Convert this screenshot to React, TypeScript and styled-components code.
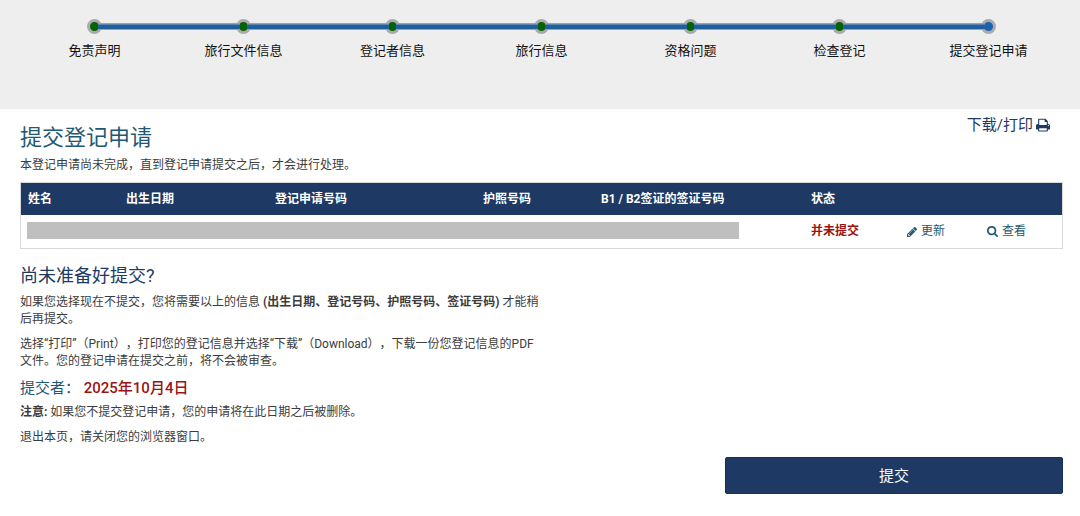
import React from "react";
import styled, { createGlobalStyle } from "styled-components";

const navy = "#1e3963";
const teal = "#1f5872";
const red = "#9b1313";

const GlobalStyle = createGlobalStyle`
  *, *::before, *::after { box-sizing: border-box; }
  body {
    margin: 0;
    background: #fff;
    color: #3c3c3c;
    font: 12px/17px Roboto, "Noto Sans CJK SC", sans-serif;
    text-spacing-trim: space-all;
  }
  h1, h2, h3, p, ol { margin: 0; padding: 0; }
  a { color: inherit; text-decoration: none; }
`;

const Progress = styled.nav`
  min-height: 109px;
  padding: 19px 17px 0 20px;
  background: #eee;
`;

const StepList = styled.ol`
  display: flex;
  list-style: none;
`;

const StepItem = styled.li`
  flex: 1;
  min-width: 0;
`;

const Track = styled.div`
  display: flex;
  align-items: center;
`;

const Segment = styled.span<{ $hidden: boolean }>`
  position: relative;
  z-index: 1;
  flex: 1;
  height: 7px;
  border: solid #93a5b5;
  border-width: 1px 0;
  background: #205f9e;
  box-shadow: inset 0 1px #5f86ac;
  visibility: ${(p) => (p.$hidden ? "hidden" : "visible")};
`;

const Dot = styled.span<{ $current: boolean }>`
  width: 15px;
  height: 15px;
  margin: 0 -4px;
  border: 3px solid #aaa;
  border-radius: 50%;
  background: ${(p) => (p.$current ? "#1862ae" : "#056205")};
`;

const StepLabel = styled.span`
  display: block;
  margin-top: 8px;
  color: #111;
  font-size: 13px;
  line-height: 18px;
  text-align: center;
`;

const Content = styled.main`
  padding: 15px 17px 22px 20px;
`;

const TitleRow = styled.header`
  display: flex;
  justify-content: space-between;
  align-items: flex-start;
`;

const Title = styled.h1`
  color: ${teal};
  font-size: 22px;
  font-weight: 400;
  line-height: 28px;
`;

const PrintLink = styled.a`
  display: flex;
  align-items: center;
  gap: 3px;
  padding-right: 13px;
  margin-top: -9px;
  color: ${navy};
  font-size: 15px;
  line-height: 20px;
`;

const Intro = styled.p`
  margin: 5px 0 8px;
`;

const Table = styled.table`
  width: 100%;
  table-layout: fixed;
  border-collapse: separate;
  border-spacing: 0;
  border: 1px solid #d8d8d8;
`;

const HeadCell = styled.th`
  height: 32px;
  padding: 0 7px;
  background: ${navy};
  color: #fff;
  font-weight: 700;
  text-align: left;
  white-space: nowrap;
`;

const Cell = styled.td<{ $inset?: boolean }>`
  height: 33px;
  padding: 0 ${(p) => (p.$inset ? "65px" : "7px")} 0 ${(p) => (p.$inset ? "6px" : "7px")};
  white-space: nowrap;
`;

const Redacted = styled.div`
  height: 17px;
  margin-bottom: 2px;
  background: #bfbfbf;
`;

const Status = styled.strong`
  color: ${red};
  font-weight: 700;
`;

const RowLink = styled.a`
  display: flex;
  align-items: center;
  gap: 4px;
  color: ${teal};
`;

const Details = styled.section`
  width: 50%;
  padding-top: 15px;
`;

const SectionTitle = styled.h2`
  margin-bottom: 6px;
  color: ${navy};
  font-size: 18px;
  font-weight: 400;
  line-height: 24px;
`;

const Paragraph = styled.p`
  margin-bottom: 8px;
`;

const Deadline = styled.h3`
  margin: 8px 0 6px;
  color: ${teal};
  font-size: 15px;
  font-weight: 400;
  line-height: 20px;
`;

const DeadlineDate = styled.time`
  color: ${red};
  font-weight: 500;
`;

const Actions = styled.div`
  display: flex;
  justify-content: flex-end;
  padding-top: 3px;
`;

const SubmitButton = styled.button`
  width: 32.4%;
  height: 37px;
  padding: 0;
  border: 1px solid #183055;
  border-radius: 2px;
  background: ${navy};
  color: #fff;
  font: 400 15px/20px Roboto, "Noto Sans CJK SC", sans-serif;
  cursor: pointer;
`;

const Glyph = styled.svg`
  flex: none;
  fill: currentColor;
`;

const PrintIcon = () => (
  <Glyph width="14" height="14" viewBox="0 50 1664 1664" aria-hidden="true">
    <path d="M384 1536h896v-256h-896v256zM384 896h896v-384h-160q-40 0-68-28t-28-68v-160h-640v640zM1536 960q0-26-19-45t-45-19-45 19-19 45 19 45 45 19 45-19 19-45zM1664 960v416q0 13-9.5 22.5t-22.5 9.5h-224v160q0 40-28 68t-68 28h-960q-40 0-68-28t-28-68v-160h-224q-13 0-22.5-9.5t-9.5-22.5v-416q0-79 56.5-135.5t135.5-56.5h64v-544q0-40 28-68t68-28h672q40 0 88 20t76 48l152 152q28 28 48 76t20 88v256h64q79 0 135.5 56.5t56.5 135.5z" />
  </Glyph>
);

const PencilIcon = () => (
  <Glyph width="10" height="10" viewBox="0 149 1515 1515" aria-hidden="true">
    <path d="M363 1536l91-91-235-235-91 91v107h128v128h107zM886 608q0-22-22-22-10 0-17 7l-542 542q-7 7-7 17 0 22 22 22 10 0 17-7l542-542q7-7 7-17zM832 416l416 416-832 832h-416v-416zM1515 512q0 53-37 90l-166 166-416-416 166-165q36-38 90-38 53 0 91 38l235 234q37 39 37 91z" />
  </Glyph>
);

const SearchIcon = () => (
  <Glyph width="11" height="11" viewBox="0 128 1664 1664" aria-hidden="true">
    <path d="M1152 832q0-185-131.5-316.5t-316.5-131.5-316.5 131.5-131.5 316.5 131.5 316.5 316.5 131.5 316.5-131.5 131.5-316.5zM1664 1664q0 52-38 90t-90 38q-54 0-90-38l-343-342q-179 124-399 124-143 0-273.5-55.5t-225-150-150-225-55.5-273.5 55.5-273.5 150-225 225-150 273.5-55.5 273.5 55.5 225 150 150 225 55.5 273.5q0 220-124 399l343 343q37 37 37 90z" />
  </Glyph>
);

const steps = ["免责声明", "旅行文件信息", "登记者信息", "旅行信息", "资格问题", "检查登记", "提交登记申请"];

const columns = [
  { label: "姓名", share: 98 },
  { label: "出生日期", share: 149 },
  { label: "登记申请号码", share: 208 },
  { label: "护照号码", share: 118 },
  { label: "B1 / B2签证的签证号码", share: 210 },
  { label: "状态", share: 96 },
  { label: "", share: 80 },
  { label: "", share: 82 },
];
const totalShare = columns.reduce((sum, c) => sum + c.share, 0);

export default function App() {
  return (
    <>
      <GlobalStyle />
      <Progress>
        <StepList>
          {steps.map((step, i) => {
            const last = i === steps.length - 1;
            return (
              <StepItem key={step} aria-current={last ? "step" : undefined}>
                <Track>
                  <Segment $hidden={i === 0} />
                  <Dot $current={last} />
                  <Segment $hidden={last} />
                </Track>
                <StepLabel>{step}</StepLabel>
              </StepItem>
            );
          })}
        </StepList>
      </Progress>
      <Content>
        <TitleRow>
          <Title>提交登记申请</Title>
          <PrintLink href="#print">
            下载/打印
            <PrintIcon />
          </PrintLink>
        </TitleRow>
        <Intro>本登记申请尚未完成，直到登记申请提交之后，才会进行处理。</Intro>
        <Table>
          <colgroup>
            {columns.map((c, i) => (
              <col key={i} style={{ width: `${(c.share / totalShare) * 100}%` }} />
            ))}
          </colgroup>
          <thead>
            <tr>
              {columns.map((c, i) => (
                <HeadCell key={i} scope="col">
                  {c.label}
                </HeadCell>
              ))}
            </tr>
          </thead>
          <tbody>
            <tr>
              <Cell colSpan={5} $inset>
                <Redacted />
              </Cell>
              <Cell>
                <Status>并未提交</Status>
              </Cell>
              <Cell>
                <RowLink href="#update">
                  <PencilIcon />
                  更新
                </RowLink>
              </Cell>
              <Cell>
                <RowLink href="#view">
                  <SearchIcon />
                  查看
                </RowLink>
              </Cell>
            </tr>
          </tbody>
        </Table>
        <Details>
          <SectionTitle>尚未准备好提交?</SectionTitle>
          <Paragraph>
            如果您选择现在不提交，您将需要以上的信息 <b>(出生日期、登记号码、护照号码、签证号码)</b> 才能稍后再提交。
          </Paragraph>
          <Paragraph>
            选择“打印”（Print），打印您的登记信息并选择“下载”（Download），下载一份您登记信息的PDF文件。您的登记申请在提交之前，将不会被审查。
          </Paragraph>
          <Deadline>
            提交者： <DeadlineDate dateTime="2025-10-04">2025年10月4日</DeadlineDate>
          </Deadline>
          <Paragraph>
            <b>注意:</b> 如果您不提交登记申请，您的申请将在此日期之后被删除。
          </Paragraph>
          <Paragraph>退出本页，请关闭您的浏览器窗口。</Paragraph>
        </Details>
        <Actions>
          <SubmitButton type="button">提交</SubmitButton>
        </Actions>
      </Content>
    </>
  );
}
